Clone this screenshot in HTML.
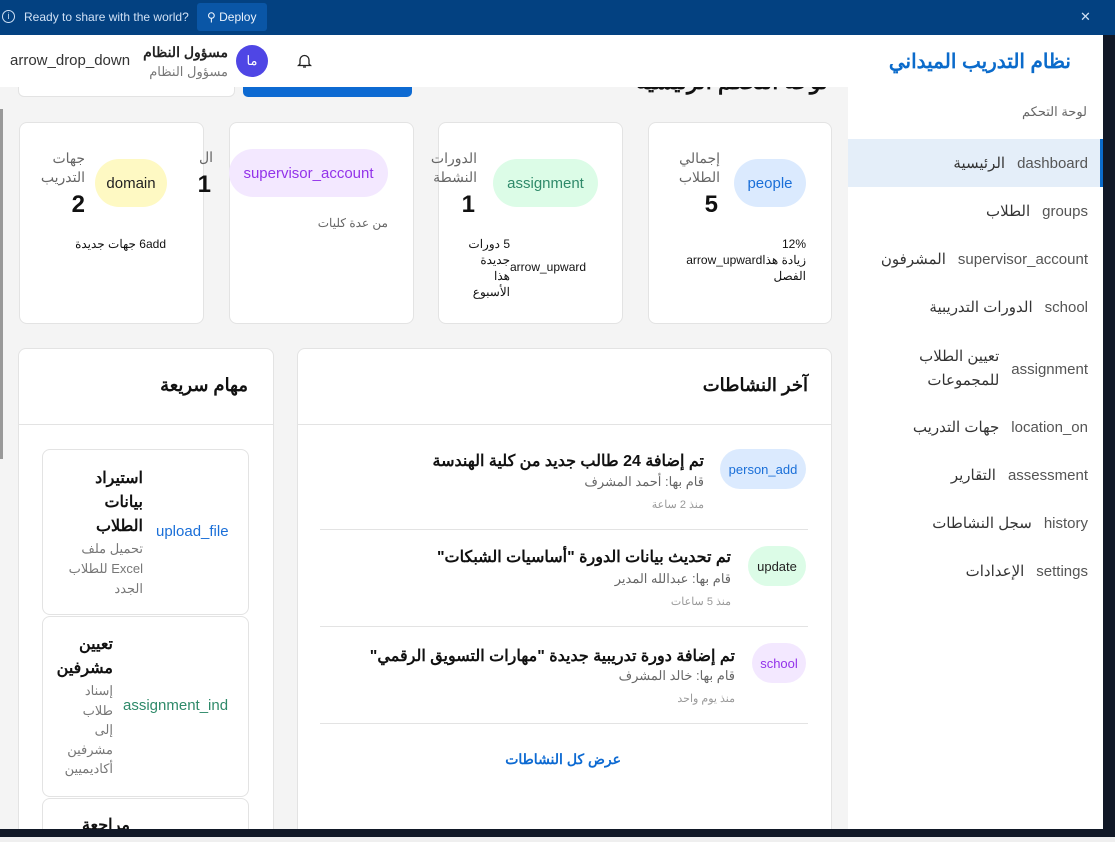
<!DOCTYPE html>
<html style="width:1115px;height:842px;overflow:hidden"><head><meta charset="utf-8"><style>
*{margin:0;padding:0;box-sizing:border-box}
body{width:1115px;height:842px;overflow:hidden;background:#f0f0f0;font-family:"Liberation Sans","Noto Sans CJK SC",sans-serif;position:relative;color:#111}
.a{position:absolute;white-space:nowrap}
.r{position:absolute;white-space:nowrap;direction:rtl;text-align:right}
.card{position:absolute;background:#fff;border:1px solid #e3e3e3;border-radius:8px}
.pill{position:absolute;border-radius:24px;display:flex;align-items:center;justify-content:center;font-size:15px}
.lbl{color:#666;font-size:14px;line-height:19px}
.num{font-size:24px;font-weight:bold;line-height:28px}
.nav{position:absolute;right:27px;direction:rtl;font-size:15px;display:flex;align-items:center;gap:12px;white-space:nowrap}
.nav .i{color:#555}
.nav .t{color:#333}
</style></head><body>
<div class="a" style="left:0;top:0;width:1115px;height:35px;background:#034181"></div>
<div class="a" style="left:2px;top:10px;width:13px;height:13px;border:1.3px solid #cfe0f5;border-radius:50%;color:#cfe0f5;font-size:9px;line-height:11px;text-align:center">i</div>
<div class="a" style="left:24px;top:10px;color:#cfe0f5;font-size:12px">Ready to share with the world?</div>
<div class="a" style="left:197px;top:3px;width:70px;height:28px;background:#0a56a6;border-radius:3px;color:#eaf2fc;font-size:12px;line-height:28px;padding-left:10px">⚲ Deploy</div>
<div class="a" style="left:1080px;top:9px;color:#cfe0f5;font-size:13px">✕</div>
<div class="a" style="left:0;top:35px;width:1103px;height:52px;background:#fff"></div>
<div class="a" style="left:10px;top:52px;font-size:15px;color:#333">arrow_drop_down</div>
<div class="r" style="right:887px;top:44px;font-size:14px;font-weight:bold;color:#222">مسؤول النظام</div>
<div class="r" style="right:887px;top:64px;font-size:13px;color:#777">مسؤول النظام</div>
<div class="a" style="left:236px;top:45px;width:32px;height:32px;border-radius:50%;background:#4f46e5;color:#fff;font-size:13px;text-align:center;line-height:32px">ما</div>
<svg class="a" style="left:297px;top:53px" width="15" height="16" viewBox="0 0 15 16"><path d="M3 11V7a4.5 4.5 0 0 1 9 0v4l1.5 1.5h-12z M6 14h3" fill="none" stroke="#222" stroke-width="1.3"/></svg>
<div class="a" style="left:0;top:87px;width:848px;height:742px;background:#f4f4f4;overflow:hidden">
  <div class="a" style="left:0;top:22px;width:3px;height:350px;background:#999"></div>
  <div class="a" style="left:18px;top:-20px;width:217px;height:30px;background:#fff;border:1px solid #e3e3e3;border-radius:6px"></div>
  <div class="a" style="left:243px;top:-20px;width:169px;height:30px;background:#0d6ad2;border-radius:5px"></div>
  <div class="r" style="right:20px;top:-18px;font-size:22px;font-weight:bold">لوحة التحكم الرئيسية</div>
<div class="card" style="left:648px;top:35px;width:184px;height:202px"></div>
<div class="card" style="left:438px;top:35px;width:185px;height:202px"></div>
<div class="card" style="left:229px;top:35px;width:185px;height:202px"></div>
<div class="card" style="left:19px;top:35px;width:185px;height:202px"></div>
<div class="card" style="left:297px;top:261px;width:535px;height:481px;border-bottom:none;border-radius:8px 8px 0 0"></div>
<div class="card" style="left:18px;top:261px;width:256px;height:481px;border-bottom:none;border-radius:8px 8px 0 0"></div>
<div class="card" style="left:42px;top:362px;width:207px;height:166px"></div>
<div class="card" style="left:42px;top:529px;width:207px;height:181px"></div>
<div class="card" style="left:42px;top:711px;width:207px;height:31px;border-bottom:none;border-radius:8px 8px 0 0"></div>
<div class="r" style="right:718px;top:728px;font-size:16px;font-weight:bold">مراجعة</div>
</div>

<div class="pill" style="left:734px;top:159px;width:72px;height:48px;background:#dbeafe;color:#1a6fd8">people</div>
<div class="r lbl" style="right:395px;top:149px">إجمالي<br>الطلاب</div>
<div class="r num" style="right:397px;top:191px">5</div>
<div class="r" style="right:309px;top:236px;font-size:12px;line-height:16px">12%<br>زيادة هذا<span style="direction:ltr">arrow_upward</span><br>الفصل</div>

<div class="pill" style="left:493px;top:159px;width:105px;height:48px;background:#dcfce7;color:#2f8a6a">assignment</div>
<div class="r lbl" style="right:638px;top:149px">الدورات<br>النشطة</div>
<div class="r num" style="right:640px;top:191px">1</div>
<div class="r" style="right:605px;top:236px;font-size:12px;line-height:16px">5 دورات<br>جديدة<br>هذا<br>الأسبوع</div>
<div class="a" style="left:510px;top:260px;font-size:12px">arrow_upward</div>

<div class="pill" style="left:229px;top:149px;width:159px;height:48px;background:#f3e8ff;color:#9333ea">supervisor_account</div>
<div class="r lbl" style="right:902px;top:148px">ال</div>
<div class="r num" style="right:904px;top:171px">1</div>
<div class="r" style="right:727px;top:216px;font-size:12px;color:#666">من عدة كليات</div>

<div class="pill" style="left:95px;top:159px;width:72px;height:48px;background:#fef9c3;color:#222">domain</div>
<div class="r lbl" style="right:1030px;top:149px">جهات<br>التدريب</div>
<div class="r num" style="right:1030px;top:191px">2</div>
<div class="r" style="right:949px;top:237px;font-size:12px">6add جهات جديدة</div>

<div class="a" style="left:298px;top:424px;width:533px;height:1px;background:#e3e3e3"></div>
<div class="r" style="right:307px;top:375px;font-size:18px;font-weight:bold">آخر النشاطات</div>

<div class="pill" style="left:720px;top:449px;width:86px;height:40px;background:#dbeafe;color:#1a6fd8;font-size:13px">person_add</div>
<div class="r" style="right:411px;top:451px;font-size:16px;font-weight:bold">تم إضافة 24 طالب جديد من كلية الهندسة</div>
<div class="r" style="right:411px;top:474px;font-size:13px;color:#666">قام بها: أحمد المشرف</div>
<div class="r" style="right:411px;top:498px;font-size:11px;color:#999">منذ 2 ساعة</div>
<div class="a" style="left:320px;top:529px;width:488px;height:1px;background:#e3e3e3"></div>

<div class="pill" style="left:748px;top:546px;width:58px;height:40px;background:#dcfce7;color:#222;font-size:13px">update</div>
<div class="r" style="right:384px;top:547px;font-size:16px;font-weight:bold">تم تحديث بيانات الدورة "أساسيات الشبكات"</div>
<div class="r" style="right:384px;top:571px;font-size:13px;color:#666">قام بها: عبدالله المدير</div>
<div class="r" style="right:384px;top:595px;font-size:11px;color:#999">منذ 5 ساعات</div>
<div class="a" style="left:320px;top:626px;width:488px;height:1px;background:#e3e3e3"></div>

<div class="pill" style="left:752px;top:643px;width:54px;height:40px;background:#f3e8ff;color:#9333ea;font-size:13px">school</div>
<div class="r" style="right:380px;top:646px;font-size:16px;font-weight:bold">تم إضافة دورة تدريبية جديدة "مهارات التسويق الرقمي"</div>
<div class="r" style="right:380px;top:668px;font-size:13px;color:#666">قام بها: خالد المشرف</div>
<div class="r" style="right:380px;top:692px;font-size:11px;color:#999">منذ يوم واحد</div>
<div class="a" style="left:320px;top:723px;width:488px;height:1px;background:#e3e3e3"></div>
<div class="r" style="right:494px;top:751px;font-size:14px;font-weight:bold;color:#0d6ad2">عرض كل النشاطات</div>

<div class="a" style="left:19px;top:424px;width:254px;height:1px;background:#e3e3e3"></div>
<div class="r" style="right:867px;top:375px;font-size:18px;font-weight:bold">مهام سريعة</div>

<div class="a" style="left:156px;top:523px;font-size:15px;color:#1a6fd8">upload_file</div>
<div class="r" style="right:972px;top:467px;font-size:16px;font-weight:bold;line-height:24px">استيراد<br>بيانات<br>الطلاب</div>
<div class="r" style="right:972px;top:539px;font-size:13px;color:#777;line-height:20px">تحميل ملف<br>Excel للطلاب<br>الجدد</div>

<div class="a" style="left:123px;top:697px;font-size:15px;color:#2f8a6a">assignment_ind</div>
<div class="r" style="right:1002px;top:633px;font-size:16px;font-weight:bold;line-height:24px">تعيين<br>مشرفين</div>
<div class="r" style="right:1002px;top:681px;font-size:13px;color:#777;line-height:19.5px">إسناد<br>طلاب<br>إلى<br>مشرفين<br>أكاديميين</div>

<div class="a" style="left:848px;top:35px;width:255px;height:794px;background:#fff"></div>
<div class="r" style="right:44px;top:49px;font-size:20px;font-weight:bold;color:#0b6bcb">نظام التدريب الميداني</div>
<div class="r" style="right:28px;top:104px;font-size:13px;color:#666">لوحة التحكم</div>
<div class="a" style="left:848px;top:139px;width:255px;height:48px;background:#e4eef9"></div>
<div class="a" style="left:1100px;top:139px;width:3px;height:48px;background:#0b6bcb"></div>
<div class="nav" style="top:154px"><span class="i">dashboard</span><span class="t">الرئيسية</span></div>
<div class="nav" style="top:202px"><span class="i">groups</span><span class="t">الطلاب</span></div>
<div class="nav" style="top:250px"><span class="i">supervisor_account</span><span class="t">المشرفون</span></div>
<div class="nav" style="top:298px"><span class="i">school</span><span class="t">الدورات التدريبية</span></div>
<div class="nav" style="top:345px"><span class="i">assignment</span><span class="t" style="line-height:24px">تعيين الطلاب<br>للمجموعات</span></div>
<div class="nav" style="top:418px"><span class="i">location_on</span><span class="t">جهات التدريب</span></div>
<div class="nav" style="top:466px"><span class="i">assessment</span><span class="t">التقارير</span></div>
<div class="nav" style="top:514px"><span class="i">history</span><span class="t">سجل النشاطات</span></div>
<div class="nav" style="top:562px"><span class="i">settings</span><span class="t">الإعدادات</span></div>

<div class="a" style="left:1103px;top:35px;width:12px;height:802px;background:#111827"></div>
<div class="a" style="left:0;top:829px;width:1115px;height:8px;background:#111827"></div>
<div class="a" style="left:0;top:837px;width:1115px;height:5px;background:#efefef"></div>
</body></html>
